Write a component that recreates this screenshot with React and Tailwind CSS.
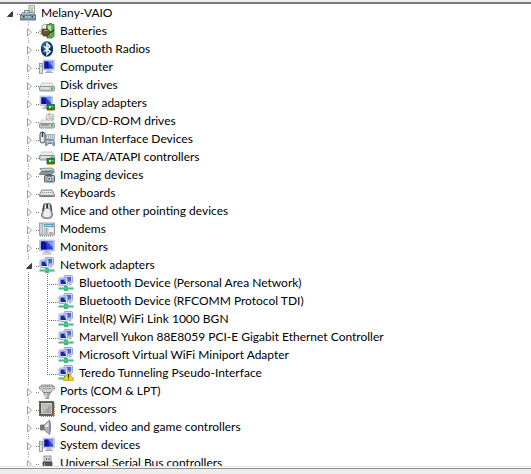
import { useState } from 'react';

const Screen = ({ x = 3, y = 1, w = 12, h = 9 }) => (
  <g>
    <rect x={x} y={y} width={w} height={h} rx="0.5" fill="#cdd5e8" stroke="#a3adc6" strokeWidth="0.6" />
    <rect x={x + 1.4} y={y + 1.4} width={w - 2.8} height={h - 2.8} fill="#2a3fd6" />
    <path d={`M${x + 1.4} ${y + 1.4}h${w * 0.3}l${w * 0.12} ${h - 2.8}h-${w * 0.42}z`} fill="#0d14a0" />
    <path d={`M${x + w * 0.5} ${y + 1.4}H${x + w - 1.4}V${y + h * 0.75}z`} fill="#7c9af4" />
  </g>
);

const Drive = ({ y = 6 }) => (
  <g>
    <path d={`M3 ${y}H13L15.500 ${y + 4}H0.500z`} fill="#eceeee" stroke="#b0b4b6" strokeWidth="0.7" />
    <rect x="0.500" y={y + 3.5} width="15" height="4.500" rx="1.200" fill="#c8cccd" stroke="#777c7e" strokeWidth="0.8" />
    <path d={`M2 ${y + 5}H10`} stroke="#f6f8f8" />
    <rect x="12" y={y + 4.5} width="2" height="2" fill="#42b64a" />
  </g>
);

const Card = () => (
  <g>
    <rect x="8" y="9.500" width="7.500" height="5.500" fill="#1d8746" stroke="#0c5f2b" strokeWidth="0.7" />
    <path d="M10 11h2v2h-2zM13.200 11h1v1h-1z" fill="#b9eac1" />
    <path d="M9 15.500H14" stroke="#d5b948" />
  </g>
);

const Network = () => (
  <g>
    <rect x="6" y="0.500" width="8.500" height="7.500" rx="1" fill="#cfd6ef" stroke="#8893bd" strokeWidth="0.8" />
    <rect x="8.500" y="2" width="4.500" height="4.500" fill="#4a64d8" />
    <rect x="1" y="3" width="8.500" height="7.500" rx="1" fill="#e1e6f8" stroke="#8893bd" strokeWidth="0.8" />
    <rect x="2.500" y="4.500" width="5.500" height="4.500" fill="#1426b4" />
    <path d="M5.500 4.500H8v4z" fill="#7d9cf2" />
    <path d="M11 8.500h2v2h-2z" fill="#a2abc9" />
    <path d="M0.500 13.500H15.500" stroke="#2daf72" strokeWidth="2" />
    <path d="M6 11h4v5H6z" fill="#33bd7b" />
    <path d="M1 13H15" stroke="#8ae0b5" strokeWidth="0.6" />
  </g>
);

const Tower = () => (
  <g>
    <Screen x={4} y={1} w={11.5} h={10} />
    <path d="M8 11h4l1 2H7z" fill="#bac0cb" />
    <path d="M6 13.500H14" stroke="#a4abb8" />
    <rect x="0.500" y="4.500" width="3" height="10" fill="#dde1e2" stroke="#868c90" strokeWidth="0.8" />
    <path d="M1.500 7H3" stroke="#3fad4b" />
  </g>
);

const icons = {
  root: (
    <g>
      <rect x="9" y="0.500" width="5.500" height="10" fill="#e6ebdc" stroke="#8c9890" strokeWidth="0.8" />
      <rect x="10.500" y="2" width="2.500" height="5" fill="#b0c7a6" />
      <path d="M4.500 8V5.500h5V8" fill="none" stroke="#6b7a87" />
      <path d="M2.500 7.500h11l2 3H0.500z" fill="#b7c6d2" stroke="#6e7f8d" strokeWidth="0.7" />
      <rect x="0.500" y="10" width="15" height="5" fill="#7f95a6" stroke="#4e6170" strokeWidth="0.8" />
      <path d="M1 12H15" stroke="#c7d5df" />
      <path d="M3 11h1.500v2H3zM11.500 11H13v2h-1.500z" fill="#3d4c58" />
    </g>
  ),
  battery: (
    <g>
      <path d="M7.500 1.500h3V0.500h2v1H15V13l-2 2H8z" fill="#5aae48" stroke="#2b7327" strokeWidth="0.8" />
      <path d="M9 2.500h3v9H9z" fill="#b9e6a5" />
      <path d="M3 5C3 1 6 1 8 2" fill="none" stroke="#9aa296" />
      <path d="M3 6h5l3 2v3l-3 2H4.500L2.500 10z" fill="#62513a" stroke="#342a1e" strokeWidth="0.7" />
      <path d="M0 8h3M0.500 11h3" stroke="#b88b42" strokeWidth="1.200" />
      <path d="M5 7.500h3l1 1" fill="none" stroke="#b9a382" />
      <path d="M11 9.500c3 0 3-2 4-3" fill="none" stroke="#32422b" strokeWidth="1.500" />
    </g>
  ),
  bluetooth: (
    <g>
      <ellipse cx="8" cy="8" rx="6.200" ry="7.700" fill="#0d3970" />
      <ellipse cx="7" cy="5" rx="4" ry="4" fill="#265e9d" />
      <path d="M4.800 5L11 10.500L8 13.500V2.500L11 5.500L4.800 11" fill="none" stroke="#fff" strokeWidth="1.400" />
    </g>
  ),
  computer: <Tower />,
  disk: <Drive />,
  display: (
    <g>
      <Screen x={1} y={1} w={12.5} h={9.5} />
      <path d="M5 10.500h3v2H5zM3 12.500h5v1.500H3z" fill="#b6bec9" />
      <Card />
    </g>
  ),
  dvd: (
    <g>
      <circle cx="11" cy="4.500" r="4" fill="#eef1ef" stroke="#979f9d" strokeWidth="0.8" />
      <path d="M11 4.500L8.500 1.500L11 0.800zM11 4.500l3.500 1-1.500 2.300z" fill="#dcaab0" />
      <path d="M11 4.500L14 2l.8 2zM11 4.500L8 7 7.500 5z" fill="#a6d3b9" />
      <circle cx="11" cy="4.500" r="1" fill="#fff" stroke="#969d9c" strokeWidth="0.6" />
      <Drive y={7} />
      <path d="M2 12H10" stroke="#55595b" />
    </g>
  ),
  hid: (
    <g>
      <rect x="6" y="3.500" width="9.500" height="5" fill="#d9dde1" stroke="#9097a0" strokeWidth="0.7" />
      <path d="M7 5H15M7 7H15" stroke="#7d8691" strokeDasharray="1 1" />
      <rect x="1" y="1" width="5" height="11" rx="2.400" fill="#e3e5e7" stroke="#45494c" />
      <path d="M3.500 1V6" stroke="#303437" strokeWidth="1.400" />
      <path d="M7 9.500c1-1.500 2-.5 4-.5s3-1 4 .5l.7 4.500c-.5 2-2 0-3-1.500H9.500C8.500 14 7 16 6.500 14z" fill="#9cb4d0" stroke="#4d637e" strokeWidth="0.8" />
      <path d="M8 10.500h1.500M12.500 10.500H14" stroke="#f0f5fa" />
    </g>
  ),
  ide: (
    <g>
      <Drive y={3} />
      <Card />
    </g>
  ),
  imaging: (
    <g>
      <path d="M1 1.500L13 1l2.500 2L3 4.500z" fill="#cbd4d6" stroke="#727f84" strokeWidth="0.8" />
      <path d="M0.500 6.500L2.500 4.500H15.500L13 7.500H0.500z" fill="#8b999f" stroke="#505d63" strokeWidth="0.7" />
      <rect x="5.500" y="8.500" width="10" height="6.500" rx="0.700" fill="#a5b8c1" stroke="#42535d" strokeWidth="0.9" />
      <path d="M8 7h4v1.500H8z" fill="#52626b" />
      <circle cx="10.200" cy="11.700" r="2.500" fill="#e7eff2" stroke="#3a4b54" strokeWidth="0.7" />
      <circle cx="10.200" cy="11.700" r="1" fill="#314f68" />
      <path d="M13.500 10h1" stroke="#fff" />
    </g>
  ),
  keyboard: (
    <g>
      <path d="M3 5H13L15.500 9.500V11.500H0.500V9.500z" fill="#d0d1d4" stroke="#777a80" strokeWidth="0.8" strokeLinejoin="round" />
      <path d="M3.500 6.500H13M2.500 8.500H14" stroke="#fafafa" strokeDasharray="1.300 .7" />
      <path d="M3 7.500H13.500" stroke="#92959c" strokeDasharray="1 1" />
      <path d="M1 11H15" stroke="#55585d" />
    </g>
  ),
  mouse: (
    <g>
      <path d="M5 1C7 0 10 0 11.500 1L13.500 12C13.500 14.500 12 15.500 8 15.500S2.500 14.500 2.500 12z" fill="#a9abad" stroke="#626568" strokeWidth="0.8" />
      <path d="M5.500 7C7 5 9.500 5 11 7l1 5c-1 3-7 3-8 0z" fill="#edeeee" />
      <path d="M5 1.500L4 8M11.500 1.500L12.500 8" stroke="#393c3f" strokeWidth="1.200" />
      <path d="M8.200 1V5.500" stroke="#222" strokeWidth="1.500" />
      <path d="M6.500 1.500v3.500M10 1.500v3.500" stroke="#f5f5f5" />
    </g>
  ),
  modem: (
    <g>
      <rect x="0.500" y="2" width="15" height="12" fill="#dfe4e7" stroke="#7b868c" strokeWidth="0.8" />
      <path d="M0.500 2h3.500v12H0.500z" fill="#a6b2b8" />
      <path d="M2 3V13" stroke="#eef4f7" />
      <rect x="5" y="3" width="9.500" height="3" fill="#4f9db9" />
      <path d="M6 4.500H13" stroke="#b9e8f0" />
      <path d="M5.500 8H9M5.500 10H9M5.500 12H9" stroke="#5b6972" strokeDasharray="1 .6" />
      <path d="M10 8H14.500M10 10H14.500" stroke="#fff" />
      <path d="M10 12H14" stroke="#c56654" />
      <path d="M1 15H15" stroke="#67747b" strokeDasharray="1 1" />
    </g>
  ),
  monitor: (
    <g>
      <Screen x={0.5} y={1} w={15} h={11} />
      <path d="M6 12h4v2H6z" fill="#aeb4bb" />
      <ellipse cx="8" cy="14.500" rx="4.500" ry="1.200" fill="#d5d8dc" stroke="#a3a9b1" strokeWidth="0.5" />
    </g>
  ),
  network: <Network />,
  warning: (
    <g>
      <Network />
      <path d="M10.500 6L15.700 15.500H5.300z" fill="#fbd92f" stroke="#d3a516" strokeWidth="0.8" strokeLinejoin="round" />
      <path d="M10.500 9V12.500M10.500 13.400V14.600" stroke="#251f0b" strokeWidth="1.300" />
    </g>
  ),
  port: (
    <g>
      <path d="M0.500 3.500H2.500V2H13.500V3.500H15.500V6H13.500L12 9.500H4L2.500 6H0.500z" fill="#ced1d3" stroke="#777c80" strokeWidth="0.8" />
      <path d="M4 3.500H12.500M4.500 5.500H12" stroke="#6b7074" strokeDasharray="1 1" />
      <path d="M5 9.500h6v2L9.500 13v2.500h-3V13L5 11.500z" fill="#a8adb0" stroke="#7b8084" strokeWidth="0.7" />
      <path d="M7 10v5" stroke="#edf0f1" />
    </g>
  ),
  processor: (
    <g>
      <path d="M2 15.500H15.500V1" fill="none" stroke="#b3764a" strokeDasharray="1 1" />
      <rect x="0.500" y="0.500" width="14" height="14" fill="#5b5854" stroke="#494643" strokeWidth="0.7" />
      <rect x="2.500" y="2.500" width="10" height="10" fill="#bcbcba" stroke="#dedddd" strokeWidth="0.8" />
      <path d="M3.500 12L12 3.500V12z" fill="#a3a2a0" />
      <path d="M12.500 13.500H14" stroke="#ca503a" strokeWidth="1.500" />
    </g>
  ),
  sound: (
    <g>
      <path d="M1.500 6H5V11H1.500z" fill="#777d81" stroke="#565c60" strokeWidth="0.7" />
      <path d="M5 6L10.500 1V15.500L5 11z" fill="#adb2b5" stroke="#797f83" strokeWidth="0.7" />
      <path d="M6 6.500L9.500 3.500V8H6z" fill="#e7eaeb" />
      <path d="M10.500 1C12.200 4 12.200 12 10.500 15.500" fill="#858b90" stroke="#757b80" strokeWidth="0.6" />
    </g>
  ),
  usb: (
    <g>
      <rect x="5" y="1" width="7" height="6" fill="#d5d6d8" stroke="#808387" strokeWidth="0.8" />
      <path d="M7 3h1v2H7zM9.500 3h1v2h-1z" fill="#54575a" />
      <path d="M4 7H13V15.500H4z" fill="#55585b" stroke="#393b3e" strokeWidth="0.7" />
      <path d="M5.500 8V14" stroke="#a0a4a8" />
    </g>
  ),
};

const categories = [
  ['Batteries', 'battery'],
  ['Bluetooth Radios', 'bluetooth'],
  ['Computer', 'computer'],
  ['Disk drives', 'disk'],
  ['Display adapters', 'display'],
  ['DVD/CD-ROM drives', 'dvd'],
  ['Human Interface Devices', 'hid'],
  ['IDE ATA/ATAPI controllers', 'ide'],
  ['Imaging devices', 'imaging'],
  ['Keyboards', 'keyboard'],
  ['Mice and other pointing devices', 'mouse'],
  ['Modems', 'modem'],
  ['Monitors', 'monitor'],
  ['Network adapters', 'network', [
    ['Bluetooth Device (Personal Area Network)', 'network'],
    ['Bluetooth Device (RFCOMM Protocol TDI)', 'network'],
    ['Intel(R) WiFi Link 1000 BGN', 'network'],
    ['Marvell Yukon 88E8059 PCI-E Gigabit Ethernet Controller', 'network'],
    ['Microsoft Virtual WiFi Miniport Adapter', 'network'],
    ['Teredo Tunneling Pseudo-Interface', 'warning'],
  ]],
  ['Ports (COM & LPT)', 'port'],
  ['Processors', 'processor'],
  ['Sound, video and game controllers', 'sound'],
  ['System devices', 'computer'],
  ['Universal Serial Bus controllers', 'usb'],
];

function Icon({ name }) {
  return (
    <svg viewBox="0 0 16 16" className="size-4 shrink-0" aria-hidden="true">
      {icons[name]}
    </svg>
  );
}

function Label({ icon, children }) {
  return (
    <>
      <Icon name={icon} />
      <span className="whitespace-nowrap pl-[5px]">{children}</span>
    </>
  );
}

function Expander({ label, open, root, onClick }) {
  return (
    <button type="button" aria-label={label} aria-expanded={open} onClick={onClick} className="h-[18px] w-[19px] shrink-0">
      <svg viewBox="0 0 19 18" className="block h-[18px] w-[19px]">
        {!root && <path d="M8.500 0V1M8.500 2V3M8.500 16V17" stroke="#999" />}
        <path d="M16 10.500H19" stroke="#777" strokeDasharray="1 1" />
        {open ? (
          <path d="M11.500 7.500V12.500H6.500z" fill="#404040" stroke="#262626" strokeWidth="0.8" />
        ) : (
          <path d="M7.500 6.500V14L11.500 10.200z" fill="#fff" stroke="#a0a0a0" />
        )}
      </svg>
    </button>
  );
}

function Guide({ branch, last }) {
  return (
    <svg viewBox="0 0 19 18" className="h-[18px] w-[19px] shrink-0" aria-hidden="true">
      <path d={last ? 'M8.500 0V11' : 'M8.500 0V18'} stroke="#777" strokeDasharray="1 1" />
      {branch && <path d="M10 10.500H19" stroke="#777" strokeDasharray="1 1" />}
    </svg>
  );
}

function Category({ name, icon, devices }) {
  const [open, setOpen] = useState(Boolean(devices));
  return (
    <li>
      <div className="flex h-[18px] items-center">
        <Expander label={name} open={open} onClick={() => setOpen(!open)} />
        <Label icon={icon}>{name}</Label>
      </div>
      {open && devices && (
        <ul>
          {devices.map(([device, deviceIcon], i) => (
            <li key={device} className="flex h-[18px] items-center">
              <Guide />
              <Guide branch last={i === devices.length - 1} />
              <Label icon={deviceIcon}>{device}</Label>
            </li>
          ))}
        </ul>
      )}
    </li>
  );
}

export default function App() {
  const [open, setOpen] = useState(true);
  return (
    <div className="flex h-screen flex-col bg-white font-[Lato,'Noto_Sans',sans-serif] text-[12px] leading-[18px] text-black">
      <header className="h-1 shrink-0 border-b-2 border-[#77787b] bg-[#eeeeef]" />
      <main className="min-h-0 flex-1 overflow-hidden pl-px">
        <div className="flex h-[18px] items-center">
          <Expander root label="Melany-VAIO" open={open} onClick={() => setOpen(!open)} />
          <Label icon="root">Melany-VAIO</Label>
        </div>
        {open && (
          <ul className="pl-[19px]">
            {categories.map(([name, icon, devices]) => (
              <Category key={name} name={name} icon={icon} devices={devices} />
            ))}
          </ul>
        )}
      </main>
      <footer className="shrink-0 border-t border-[#e3e3e3]">
        <div className="mt-px h-[6px] border-t border-[#8e8e8e] bg-[#ededed]" />
      </footer>
    </div>
  );
}
